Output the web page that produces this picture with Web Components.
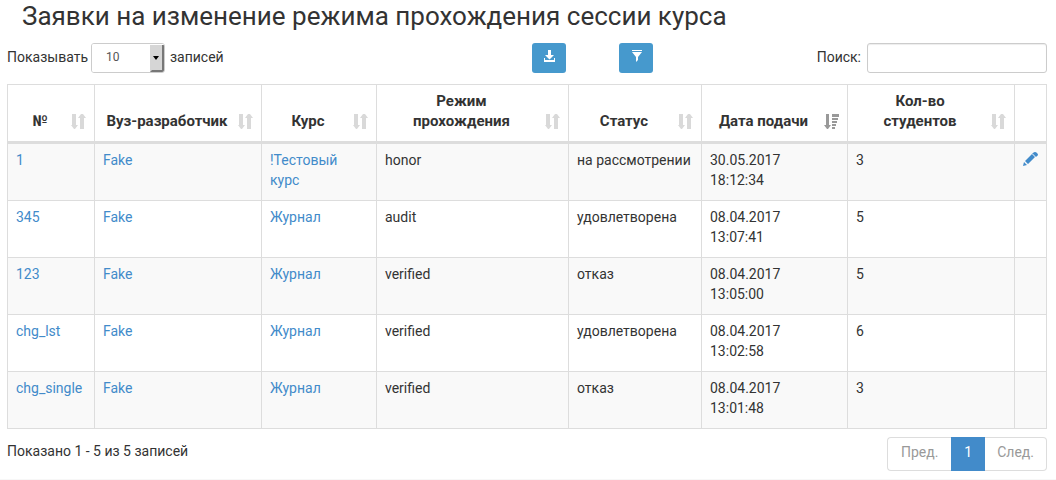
<!DOCTYPE html>
<html lang="ru">
<head>
<meta charset="utf-8">
<title>Заявки на изменение режима прохождения сессии курса</title>
<style>
body { margin: 0; background: #fff; color: #333; font: 14px/20px Roboto, "Noto Sans", sans-serif; --link: #428bca; --line: #ddd; }
</style>
</head>
<body>
<course-requests></course-requests>

<template id="t-page">
<style>
:host { display: block; border-bottom: 1px solid #f7f7f7; }
main { padding: 0 9px 8px 7px; }
h1 { margin: 0; padding: 0 15px; font-size: 26px; line-height: 32px; font-weight: 400; white-space: nowrap; }
.bar { display: grid; grid-template-columns: 4fr 121px 3fr; align-items: center; padding: 11px 0; }
.tools { display: flex; justify-content: space-between; }
.foot { display: flex; justify-content: space-between; align-items: flex-start; padding-top: 8px; }
.info { padding-top: 4px; }
page-search { justify-self: end; }
</style>
<main>
  <h1>Заявки на изменение режима прохождения сессии курса</h1>
  <div class="bar">
    <page-length></page-length>
    <div class="tools">
      <tool-button label="Скачать" icon="download"></tool-button>
      <tool-button label="Фильтр" icon="filter"></tool-button>
    </div>
    <page-search></page-search>
  </div>
  <requests-table></requests-table>
  <div class="foot">
    <div class="info">Показано 1 - 5 из 5 записей</div>
    <page-nav></page-nav>
  </div>
</main>
</template>

<template id="t-length">
<style>
:host { display: block; }
label { display: flex; align-items: flex-start; line-height: 28px; }
.box { display: flex; box-sizing: border-box; width: 74px; height: 30px; margin: 0 5px 0 3px; border: 1px solid #ccc; border-radius: 3px; overflow: hidden; position: relative; }
select { appearance: none; width: 100%; border: 0; margin: 0; padding: 0 14px 2px; background: #fff; color: #555; font: 12px/18px Roboto, sans-serif; outline: 0; }
svg { position: absolute; right: 0; top: 1px; pointer-events: none; }
</style>
<label>Показывать
  <span class="box"><select><option>10</option><option>25</option><option>50</option></select>
  <svg width="14" height="27" viewBox="0 0 14 27"><path fill="#d6d6d6" d="M0 0h14v27H0z"/><path fill="#777" d="M12 0h2v27H0l2-2h10z"/><path d="M3 11h6l-3 4z"/></svg></span>
  записей</label>
</template>

<template id="t-search">
<style>
:host { display: block; }
label { display: flex; align-items: flex-start; gap: 6px; line-height: 28px; }
input { box-sizing: border-box; width: 180px; height: 30px; margin: 0; border: 1px solid #ccc; border-radius: 3px; padding: 5px 10px; font: inherit; box-shadow: inset 0 1px 1px rgba(0,0,0,.075); }
</style>
<label>Поиск: <input type="search"></label>
</template>

<template id="t-nav">
<style>
:host { display: block; }
ul { display: flex; list-style: none; margin: 0; padding: 0; }
a { display: block; padding: 4px 12px 8px; border: 1px solid var(--line); color: #999; text-decoration: none; }
li:first-child a { padding-right: 13px; padding-left: 13px; border-radius: 4px 0 0 4px; border-right: 0; }
li:last-child a { border-radius: 0 4px 4px 0; border-left: 0; }
a[aria-current] { background: var(--link); border-color: var(--link); color: #fff; }
</style>
<nav aria-label="Страницы"><ul>
  <li><a href="#prev">Пред.</a></li>
  <li><a href="#1" aria-current="page">1</a></li>
  <li><a href="#next">След.</a></li>
</ul></nav>
</template>

<template id="t-table">
<style>
:host { display: block; }
table { width: 100%; table-layout: fixed; border-collapse: separate; border-spacing: 0; border: solid var(--line); border-width: 1px 0 0 1px; }
th, td { padding: 6px 8px 10px; border: solid var(--line); border-width: 0 1px 1px 0; text-align: left; vertical-align: top; }
thead > tr > * { border-bottom-width: 3px; }
th { font-size: 15px; font-weight: 700; vertical-align: bottom; }
.head { display: flex; align-items: flex-end; gap: 7px; }
.head span { flex: 1; text-align: center; white-space: nowrap; }
.head sort-icon { margin-bottom: 2px; }
tbody tr { height: 57px; }
tbody tr:nth-child(odd) td { background: #f9f9f9; }
a { color: var(--link); text-decoration: none; }
td svg { display: block; margin-top: 2px; }
</style>
<table>
  <colgroup></colgroup>
  <thead><tr></tr></thead>
  <tbody></tbody>
</table>
</template>

<script>
class Base extends HTMLElement {
  constructor() { super(); this.attachShadow({ mode: 'open' }); }
  stamp(id) { this.shadowRoot.append(document.getElementById(id).content.cloneNode(true)); }
}

class SortIcon extends Base {
  connectedCallback() {
    const desc = this.hasAttribute('desc');
    const down = '<path d="M2 0h3v11h2l-3 4h-1l-3-4h2z"/>';
    const rest = desc
      ? '<path d="M8 0h7v3H8zM8 4h6v2H8zM8 7h5v2H8zM8 10h4v2H8zM8 13h3v2H8z"/>'
      : '<path d="M9 15h4V4h2l-3-4h-2L7 4h2z"/>';
    this.shadowRoot.innerHTML = '<style>:host{display:block;width:15px;height:15px}svg{display:block}</style>' +
      '<svg width="15" height="15" fill="' + (desc ? '#999' : '#d9d9d9') + '" aria-hidden="true">' +
      (desc ? down : '<path d="M1 0h4v11h2l-3 4H3l-3-4h1z"/>') + rest + '</svg>';
  }
}

class ToolButton extends Base {
  connectedCallback() {
    const shapes = {
      download: '<path d="M5 0h3v5h3L6.500 9.500 2 5h3zM1 8h1v2h9V8h1v4H1z"/>',
      filter: '<path d="M2 0h10v1H2zM2 2h10L8 7v3l-2 2V7z"/>'
    };
    this.shadowRoot.innerHTML = `<style>
      :host { display: block; }
      button { display: flex; justify-content: center; box-sizing: border-box; width: 34px; height: 30px; padding: 7px 0 0; border: 0; border-radius: 3px; background: #4699cd; }
    </style><button type="button" aria-label="${this.getAttribute('label')}">
      <svg width="13" height="13" fill="#fff" aria-hidden="true">${shapes[this.getAttribute('icon')]}</svg></button>`;
  }
}

class RequestsTable extends Base {
  connectedCallback() {
    this.stamp('t-table');
    const columns = [['№', 87], ['Вуз-разработчик', 167], ['Курс', 115], ['Режим прохождения', 192],
      ['Статус', 133], ['Дата подачи', 146], ['Кол-во студентов', 167], ['', 32]];
    const rows = [
      ['1', 'Fake', '!Тестовый курс', 'honor', 'на рассмотрении', '30.05.2017 18:12:34', '3', true],
      ['345', 'Fake', 'Журнал', 'audit', 'удовлетворена', '08.04.2017 13:07:41', '5'],
      ['123', 'Fake', 'Журнал', 'verified', 'отказ', '08.04.2017 13:05:00', '5'],
      ['chg_lst', 'Fake', 'Журнал', 'verified', 'удовлетворена', '08.04.2017 13:02:58', '6'],
      ['chg_single', 'Fake', 'Журнал', 'verified', 'отказ', '08.04.2017 13:01:48', '3']
    ];
    const pencil = '<a href="#edit" aria-label="Изменить"><svg width="15" height="15" fill="#428bca"><path d="M0 14l1-4 3 3zM2 9l7-7 3 3-7 7zM10 1q2-2 4 0t0 3l-1 1-4-4z"/></svg></a>';
    const $ = s => this.shadowRoot.querySelector(s);
    $('colgroup').innerHTML = columns.map(c => `<col style="width:${c[1]}px">`).join('');
    $('thead tr').innerHTML = columns.map(([name]) => name
      ? `<th scope="col"><div class="head"><span>${name.replace(/^(Режим|Кол-во) /, '$1<br>')}</span><sort-icon${name === 'Дата подачи' ? ' desc' : ''}></sort-icon></div></th>`
      : '<td></td>').join('');
    $('tbody').innerHTML = rows.map(r => '<tr>' + columns.map((c, i) => {
      if (i === 7) return `<td>${r[7] ? pencil : ''}</td>`;
      if (i < 3) return `<td><a href="#${i}">${r[i].replace(' ', '<br>')}</a></td>`;
      return `<td>${i === 5 ? r[i].replace(' ', '<br>') : r[i]}</td>`;
    }).join('') + '</tr>').join('');
  }
}

const simple = id => class extends Base { connectedCallback() { this.stamp(id); } };
customElements.define('sort-icon', SortIcon);
customElements.define('tool-button', ToolButton);
customElements.define('requests-table', RequestsTable);
customElements.define('page-length', simple('t-length'));
customElements.define('page-search', simple('t-search'));
customElements.define('page-nav', simple('t-nav'));
customElements.define('course-requests', simple('t-page'));
</script>
</body>
</html>
